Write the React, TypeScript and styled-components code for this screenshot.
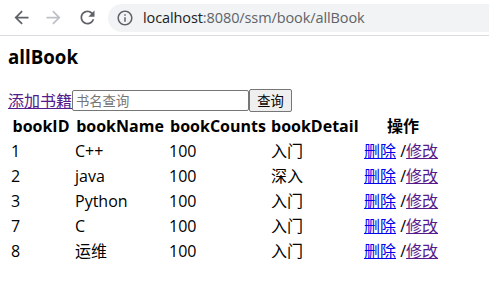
import React from 'react';
import styled, { createGlobalStyle } from 'styled-components';

type Book = {
  id: number;
  name: string;
  counts: number;
  detail: string;
};

const books: Book[] = [
  { id: 1, name: 'C++', counts: 100, detail: '入门' },
  { id: 2, name: 'java', counts: 100, detail: '深入' },
  { id: 3, name: 'Python', counts: 100, detail: '入门' },
  { id: 7, name: 'C', counts: 100, detail: '入门' },
  { id: 8, name: '运维', counts: 100, detail: '入门' },
];

const GlobalStyle = createGlobalStyle`
  html, body {
    margin: 0;
    background: #fff;
  }
  body {
    font-family: "Open Sans", "Noto Sans CJK SC", sans-serif;
    font-size: 16px;
    color: #000;
  }
`;

const ArrowBack = () => (
  <svg width="21" height="21" viewBox="0 0 24 24" fill="currentColor">
    <path d="M20 11H7.83l5.59-5.59L12 4l-8 8 8 8 1.41-1.41L7.83 13H20v-2z" />
  </svg>
);

const ArrowForward = () => (
  <svg width="21" height="21" viewBox="0 0 24 24" fill="currentColor">
    <path d="M12 4l-1.41 1.41L16.17 11H4v2h12.17l-5.58 5.59L12 20l8-8z" />
  </svg>
);

const Reload = () => (
  <svg width="21" height="21" viewBox="0 0 24 24" fill="currentColor">
    <path d="M17.65 6.35C16.2 4.9 14.21 4 12 4c-4.42 0-7.99 3.58-7.99 8s3.57 8 7.99 8c3.73 0 6.84-2.55 7.73-6h-2.08c-.82 2.33-3.04 4-5.65 4-3.31 0-6-2.69-6-6s2.69-6 6-6c1.66 0 3.14.69 4.22 1.78L13 11h7V4l-2.35 2.35z" />
  </svg>
);

const InfoIcon = () => (
  <svg width="18" height="18" viewBox="0 0 24 24" fill="currentColor">
    <path d="M11 7h2v2h-2zm0 4h2v6h-2zm1-9C6.48 2 2 6.48 2 12s4.48 10 10 10 10-4.48 10-10S17.52 2 12 2zm0 18c-4.41 0-8-3.59-8-8s3.59-8 8-8 8 3.59 8 8-3.59 8-8 8z" />
  </svg>
);

export default function App() {
  return (
    <>
      <GlobalStyle />
      <BrowserBar>
        <NavButton>
          <ArrowBack />
        </NavButton>
        <NavButton disabled>
          <ArrowForward />
        </NavButton>
        <NavButton>
          <Reload />
        </NavButton>
        <Omnibox>
          <InfoWrap>
            <InfoIcon />
          </InfoWrap>
          <Url>
            <Host>localhost</Host>:8080/ssm/book/allBook
          </Url>
        </Omnibox>
      </BrowserBar>
      <Page>
        <Title>allBook</Title>
        <SearchRow>
          <Link visited href="#">
            添加书籍
          </Link>
          <SearchInput placeholder="书名查询" />
          <SearchButton>查询</SearchButton>
        </SearchRow>
        <BookTable>
          <colgroup>
            <col style={{ width: 62 }} />
            <col style={{ width: 92 }} />
            <col style={{ width: 100 }} />
            <col style={{ width: 91 }} />
            <col style={{ width: 80 }} />
          </colgroup>
          <thead>
            <tr>
              <Th>bookID</Th>
              <Th>bookName</Th>
              <Th>bookCounts</Th>
              <Th>bookDetail</Th>
              <Th>操作</Th>
            </tr>
          </thead>
          <tbody>
            {books.map((b) => (
              <tr key={b.id}>
                <Td>{b.id}</Td>
                <Td>{b.name}</Td>
                <Td>{b.counts}</Td>
                <Td>{b.detail}</Td>
                <Td>
                  <Link href="#">删除</Link> /<Link visited href="#">修改</Link>
                </Td>
              </tr>
            ))}
          </tbody>
        </BookTable>
      </Page>
    </>
  );
}

const BrowserBar = styled.div`
  display: flex;
  align-items: center;
  height: 36px;
  padding-left: 7px;
  border-bottom: 1px solid #dadce0;
  box-sizing: border-box;
  overflow: hidden;
`;

type NavButtonProps = { disabled?: boolean };
const NavButton = styled.div<NavButtonProps>`
  display: flex;
  align-items: center;
  justify-content: center;
  width: 28px;
  height: 28px;
  margin-right: 4px;
  color: ${(p) => (p.disabled ? '#bdc1c6' : '#5f6368')};
  &:nth-child(3) {
    margin-left: 2px;
    margin-right: 7px;
  }
`;

const Omnibox = styled.div`
  display: flex;
  align-items: center;
  flex: 1 0 auto;
  height: 28px;
  padding-left: 8px;
  border-radius: 14px 0 0 14px;
  background: #f1f3f4;
`;

const InfoWrap = styled.span`
  display: flex;
  color: #5f6368;
  margin-right: 9px;
`;

const Url = styled.span`
  font-family: "Open Sans", sans-serif;
  font-size: 14.5px;
  color: #5f6368;
  white-space: nowrap;
  letter-spacing: -0.1px;
`;

const Host = styled.span`
  color: #202124;
`;

const Page = styled.div`
  padding: 0 8px;
`;

const Title = styled.h3`
  margin: 9px 0 0;
  font-size: 18.7px;
  line-height: 24px;
  font-weight: bold;
`;

const SearchRow = styled.div`
  display: flex;
  align-items: center;
  height: 24px;
  margin-top: 19px;
`;

type LinkProps = { visited?: boolean };
const Link = styled.a<LinkProps>`
  color: ${(p) => (p.visited ? '#551a8b' : '#0000ee')};
  text-decoration: underline;
`;

const SearchInput = styled.input`
  box-sizing: border-box;
  width: 177px;
  height: 21px;
  margin: 0;
  padding: 0 3px;
  border: 1px solid #767676;
  border-radius: 2px;
  font-family: "Noto Sans CJK SC", sans-serif;
  font-size: 13.3px;
  &::placeholder {
    color: #757575;
  }
`;

const SearchButton = styled.button`
  box-sizing: border-box;
  height: 23px;
  width: 43px;
  margin: 0;
  padding: 0 6px;
  border: 1px solid #767676;
  border-radius: 2px;
  background: #efefef;
  color: #000;
  font-family: "Noto Sans CJK SC", sans-serif;
  font-size: 13.3px;
`;

const BookTable = styled.table`
  table-layout: fixed;
  width: 435px;
  border-spacing: 2px;
  margin-top: 1px;
`;

const Th = styled.th`
  height: 21px;
  padding: 1px;
  line-height: 21px;
  font-size: 16px;
  font-weight: bold;
  white-space: nowrap;
  text-align: center;
  &:nth-child(4) {
    text-align: left;
  }
`;

const Td = styled.td`
  height: 21px;
  padding: 1px;
  line-height: 21px;
  font-size: 16px;
  white-space: nowrap;
`;
